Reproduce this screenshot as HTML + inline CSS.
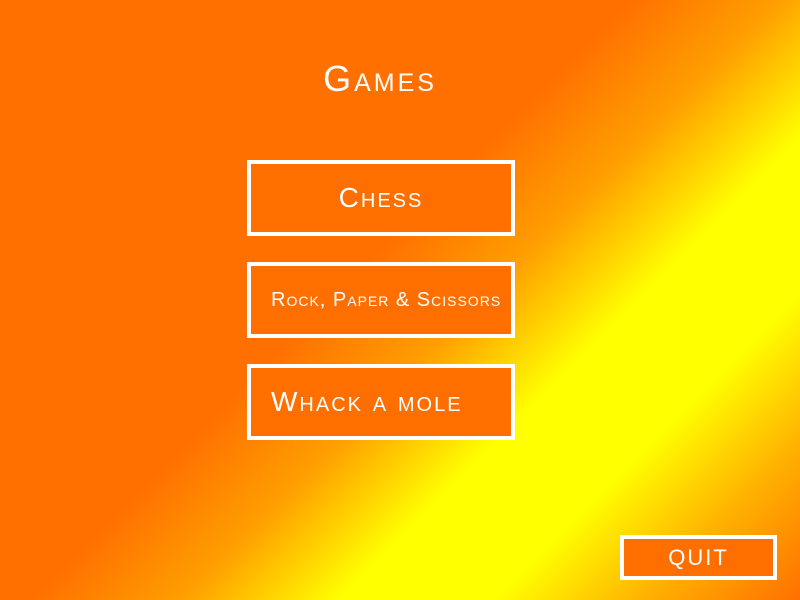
<!DOCTYPE html>
<html><head><style>
html,body{margin:0;padding:0}
body{width:800px;height:600px;overflow:hidden;position:relative;
background:linear-gradient(135deg,#ff6f00 0%,#ff7000 45%,#ffa000 56%,#ffff00 67%,#ffff00 78%,#ffb000 89%,#ff7000 100%);
font-family:"Liberation Sans",sans-serif;color:#fff}
h1{position:absolute;left:0;width:760px;text-align:center;top:58px;margin:0;font-weight:normal;font-size:36px;font-variant:small-caps;letter-spacing:3px}
.b{position:absolute;box-sizing:border-box;border:4px solid #fff;background:#ff6f00;font-variant:small-caps;letter-spacing:2px;display:flex;align-items:center;white-space:nowrap}
</style></head><body>
<h1>Games</h1>
<div class="b" style="left:247px;top:160px;width:268px;height:76px;justify-content:center;font-size:28px">Chess</div>
<div class="b" style="left:247px;top:262px;width:268px;height:76px;padding-left:20px;font-size:20px;letter-spacing:1px">Rock, Paper &amp; Scissors</div>
<div class="b" style="left:247px;top:364px;width:268px;height:76px;padding-left:20px;font-size:28px">Whack a mole</div>
<div class="b" style="left:620px;top:535px;width:157px;height:45px;justify-content:center;font-size:22px;font-variant:normal">QUIT</div>
</body></html>
